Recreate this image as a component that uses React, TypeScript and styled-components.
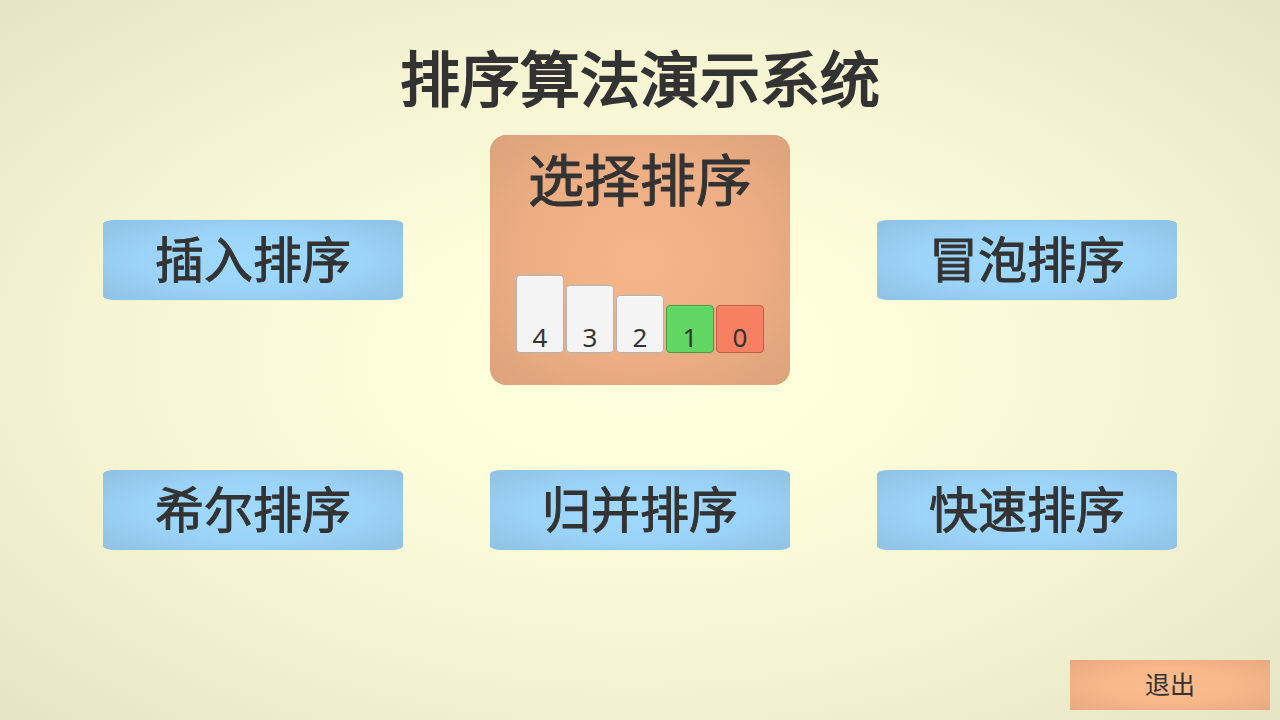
import React from "react";
import styled, { createGlobalStyle } from "styled-components";

const GlobalStyle = createGlobalStyle`
  *, *::before, *::after { box-sizing: border-box; }
  body {
    margin: 0;
    color: #333333;
    font-family: "Noto Sans", "Noto Sans CJK SC", sans-serif;
  }
  button { font-family: inherit; color: inherit; border: 0; padding: 0; cursor: pointer; }
`;

const Page = styled.main`
  display: flex;
  flex-direction: column;
  min-height: 100vh;
  background: radial-gradient(
    ellipse farthest-corner at center,
    #ffffdd 0%,
    #ffffdc 20%,
    #f4f4d2 62%,
    #e5e5c6 100%
  );
`;

const Title = styled.h1`
  margin: 0;
  padding-top: 31px;
  height: 135px;
  font-family: "Noto Sans CJK SC", sans-serif;
  font-size: 60px;
  font-weight: 400;
  line-height: 90px;
  text-align: center;
  -webkit-text-stroke: 2px #333333;
`;

const Menu = styled.nav`
  display: grid;
  grid-template-columns: repeat(3, 300px);
  justify-content: space-between;
  align-items: center;
  row-gap: 85px;
  padding: 0 103px;
`;

const SortButton = styled.button`
  height: 80px;
  padding-bottom: 6px;
  border-radius: 12px / 4px;
  background: radial-gradient(ellipse farthest-corner at center, #a0daff 0%, #9cd4f9 50%, #8fc1e2 100%);
  font-family: "Noto Sans CJK SC", sans-serif;
  font-size: 49px;
  line-height: 74px;
  -webkit-text-stroke: 1px #333333;
`;

const ActiveCard = styled.button`
  display: flex;
  flex-direction: column;
  justify-content: space-between;
  align-items: center;
  height: 250px;
  padding: 2px 0 32px;
  border-radius: 16px;
  background: radial-gradient(ellipse farthest-corner at center, #f6b68a 0%, #efaf85 50%, #dba27a 100%);
`;

const CardTitle = styled.span`
  font-family: "Noto Sans CJK SC", sans-serif;
  font-size: 56px;
  line-height: 80px;
  -webkit-text-stroke: 1px #333333;
`;

const Bars = styled.span`
  display: flex;
  align-items: flex-end;
  gap: 2px;
`;

const tones = {
  plain: { fill: "#f4f4f4", edge: "#b3b3b3", shine: "#ffffff" },
  current: { fill: "#62d662", edge: "#47994a", shine: "#6ae86a" },
  least: { fill: "#f78063", edge: "#b85f4a", shine: "#ff8b6c" },
};

type Tone = keyof typeof tones;

const Bar = styled.span<{ $height: number; $tone: Tone }>`
  display: flex;
  align-items: flex-end;
  justify-content: center;
  width: 48px;
  height: ${(p) => p.$height}px;
  border: 1px solid ${(p) => tones[p.$tone].edge};
  border-radius: 4px;
  background: ${(p) => tones[p.$tone].fill};
  box-shadow: inset 0 1px 0 ${(p) => tones[p.$tone].shine};
  font-size: 26px;
  line-height: 30px;
`;

const Footer = styled.footer`
  display: flex;
  justify-content: flex-end;
  margin-top: auto;
  padding: 10px;
`;

const ExitButton = styled.button`
  width: 200px;
  height: 50px;
  padding-bottom: 4px;
  background: radial-gradient(ellipse farthest-corner at center, #fdbc8d 0%, #f8b789 50%, #e6a980 100%);
  font-family: "Noto Sans CJK SC", sans-serif;
  font-size: 25px;
  line-height: 46px;
`;

const bars: { value: number; height: number; tone: Tone }[] = [
  { value: 4, height: 78, tone: "plain" },
  { value: 3, height: 68, tone: "plain" },
  { value: 2, height: 58, tone: "plain" },
  { value: 1, height: 48, tone: "current" },
  { value: 0, height: 48, tone: "least" },
];

export default function App() {
  return (
    <Page lang="zh-CN">
      <GlobalStyle />
      <Title>排序算法演示系统</Title>
      <Menu>
        <SortButton type="button">插入排序</SortButton>
        <ActiveCard type="button">
          <CardTitle>选择排序</CardTitle>
          <Bars>
            {bars.map((bar) => (
              <Bar key={bar.value} $height={bar.height} $tone={bar.tone}>
                {bar.value}
              </Bar>
            ))}
          </Bars>
        </ActiveCard>
        <SortButton type="button">冒泡排序</SortButton>
        <SortButton type="button">希尔排序</SortButton>
        <SortButton type="button">归并排序</SortButton>
        <SortButton type="button">快速排序</SortButton>
      </Menu>
      <Footer>
        <ExitButton type="button">退出</ExitButton>
      </Footer>
    </Page>
  );
}
